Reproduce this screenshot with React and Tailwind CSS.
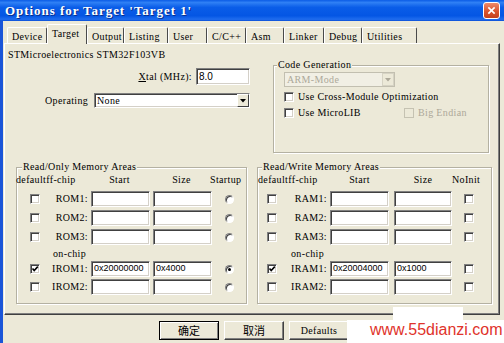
import React from 'react';

const font = "font-['Liberation_Serif',serif] text-[10px] leading-[12px] tracking-[0.35px] whitespace-nowrap";
const sim = `${font} text-black`;
const simGray = `${font} text-[#aca899]`;
const sunken = "bg-white border border-t-[#808080] border-l-[#808080] border-b-white border-r-white shadow-[inset_1px_1px_0_#404040,inset_-1px_-1px_0_#d4d0c8]";

function Check({ checked, disabled }) {
    return (
        <span className={`block shrink-0 w-[10px] h-[10px] border ${disabled ? 'border-[#c5c2b2] bg-[#ECE9D8]' : 'border-t-[#808080] border-l-[#808080] border-b-white border-r-white bg-white shadow-[inset_1px_1px_0_#404040,inset_-1px_-1px_0_#d4d0c8]'}`}>
            {checked && (
                <svg viewBox="0 0 8 8" className="w-[8px] h-[8px]">
                    <path d="M1.5 3.5 L3.2 5.5 L6.8 1.6" stroke="#000" strokeWidth="1.6" fill="none" />
                </svg>
            )}
        </span>
    );
}

function Radio({ checked }) {
    return (
        <span className="flex shrink-0 items-center justify-center w-[9px] h-[9px] rounded-full bg-white border border-t-[#808080] border-l-[#808080] border-b-white border-r-white shadow-[inset_1px_1px_0_#404040]">
            {checked && <span className="block w-[3px] h-[3px] rounded-full bg-black" />}
        </span>
    );
}

function Field({ w, value }) {
    return (
        <div className={`${w} h-[16px] shrink-0 ${sunken} flex items-center pl-[2px] font-['Liberation_Sans',sans-serif] text-[9px] text-black`}>
            {value}
        </div>
    );
}

function Btn({ children, def, cjk }) {
    return (
        <div className={`w-[60px] h-[19px] flex items-center justify-center bg-[#ECE9D8] border ${def ? 'border-black shadow-[inset_1px_1px_0_#fff,inset_-1px_-1px_0_#808080]' : 'border-t-white border-l-white border-b-[#404040] border-r-[#404040] shadow-[inset_-1px_-1px_0_#808080]'} ${cjk ? "font-['Noto_Sans_CJK_SC',sans-serif] text-[11px] text-black" : sim}`}>
            {children}
        </div>
    );
}

function Tab({ label, w, active }) {
    return (
        <div className={`${w} shrink-0 border-t border-l border-t-white border-l-white border-r border-r-[#4a4a4a] rounded-t-[2px] bg-[#ECE9D8] pl-[4px] ${sim} ${active ? 'h-[20px] pt-[3px] -mb-px relative z-10' : 'h-[16px] pt-[3px]'}`}>
            {label}
        </div>
    );
}

const tabs = [
    ['Device', 'w-[40px]'],
    ['Target', 'w-[40px]'],
    ['Output', 'w-[37px]'],
    ['Listing', 'w-[44px]'],
    ['User', 'w-[39px]'],
    ['C/C++', 'w-[39px]'],
    ['Asm', 'w-[38px]'],
    ['Linker', 'w-[40px]'],
    ['Debug', 'w-[38px]'],
    ['Utilities', 'w-[55px]'],
];

const etched = "border border-[#b4b1a2] shadow-[1px_1px_0_#fff,inset_1px_1px_0_#fff]";

function RomRow({ label, checked, start, size, startup }) {
    return (
        <div className="flex items-center h-[16px] pl-[13px]">
            <Check checked={checked} />
            <span className={`w-[51px] text-right pr-[3px] ${sim}`}>{label}</span>
            <Field w="w-[59px]" value={start} />
            <span className="w-[3px]" />
            <Field w="w-[59px]" value={size} />
            <span className="ml-[13px]"><Radio checked={startup} /></span>
        </div>
    );
}

function RamRow({ label, checked, start, size }) {
    return (
        <div className="flex items-center h-[16px] pl-[9px]">
            <Check checked={checked} />
            <span className={`w-[53px] text-right pr-[3px] ${sim}`}>{label}</span>
            <Field w="w-[59px]" value={start} />
            <span className="w-[5px]" />
            <Field w="w-[58px]" value={size} />
            <span className="ml-[12px]"><Check /></span>
        </div>
    );
}

export default function App() {
    return (
        <div className="w-[504px] h-[343px] overflow-hidden relative bg-[#ECE9D8] flex flex-col">
            {/* title bar */}
            <div className="h-[21px] shrink-0 flex items-center pl-[5px] pr-[4px] bg-[linear-gradient(to_bottom,#0b5ce6_0%,#2f80f5_12%,#0a5de8_35%,#0456e4_75%,#1f6cee_92%,#0a4fd6_100%)]">
                <span className="font-['Liberation_Serif',serif] font-bold text-[13px] leading-[14px] tracking-[0.95px] text-white [text-shadow:1px_1px_0_#0a2f8a]">Options for Target 'Target 1'</span>
                <div className="ml-auto w-[17px] h-[17px] rounded-[3px] border border-white bg-[linear-gradient(to_bottom,#ef8a6a,#d9542f_55%,#c2401c)] flex items-center justify-center">
                    <svg viewBox="0 0 10 10" className="w-[9px] h-[9px]">
                        <path d="M1.5 1.5 L8.5 8.5 M8.5 1.5 L1.5 8.5" stroke="#fff" strokeWidth="1.8" />
                    </svg>
                </div>
            </div>

            <div className="flex-1 border-l-[3px] border-[#1a55d8] flex flex-col">
                {/* tabs */}
                <div className="h-[22px] shrink-0 flex items-end pl-[4px]">
                    {tabs.map(([label, w]) => (
                        <Tab key={label} label={label} w={w} active={label === 'Target'} />
                    ))}
                </div>

                {/* tab panel */}
                <div className="ml-[1px] w-[496px] h-[272px] shrink-0 border border-t-white border-l-white border-r-[#404040] border-b-[#404040] shadow-[inset_-1px_-1px_0_#808080] flex flex-col">
                    <div className="flex">
                        <div className="w-[251px] shrink-0">
                            <div className={`pl-[3px] pt-[5px] ${sim}`}>STMicroelectronics STM32F103VB</div>
                            <div className="flex items-center justify-end pr-[6px] mt-[7px]">
                                <span className={sim}><u>X</u>tal (MHz):</span>
                                <div className={`ml-[4px] w-[54px] h-[17px] ${sunken} flex items-center pl-[2px] font-['Liberation_Sans',sans-serif] text-[10px] text-black`}>8.0</div>
                            </div>
                            <div className="flex items-center pl-[40px] mt-[8px]">
                                <span className={`w-[49px] ${sim}`}>Operating</span>
                                <div className={`w-[156px] h-[15px] ${sunken} flex items-center`}>
                                    <span className={`flex-1 pl-[2px] ${sim}`}>None</span>
                                    <span className="w-[12px] h-[13px] bg-[#ECE9D8] border border-t-white border-l-white border-b-[#404040] border-r-[#404040] flex items-center justify-center">
                                        <svg viewBox="0 0 6 4" className="w-[6px] h-[4px]"><path d="M0 0 H6 L3 3.5 Z" fill="#000" /></svg>
                                    </span>
                                </div>
                            </div>
                        </div>

                        <fieldset className={`ml-[17px] mt-[15px] w-[216px] h-[94px] ${etched}`}>
                            <legend className={`ml-[3px] px-[1px] bg-[#ECE9D8] ${sim}`}>Code Generation</legend>
                            <div className="pl-[10px]">
                                <div className="mt-[1px] w-[111px] h-[15px] border border-[#c2bfb0] bg-[#f1efe4] flex items-center">
                                    <span className={`flex-1 pl-[2px] ${simGray}`}>ARM-Mode</span>
                                    <span className="w-[12px] h-[13px] border border-[#d6d3c4] bg-[#ECE9D8] flex items-center justify-center">
                                        <svg viewBox="0 0 6 4" className="w-[6px] h-[4px]"><path d="M0 0 H6 L3 3.5 Z" fill="#aca899" /></svg>
                                    </span>
                                </div>
                                <div className="flex items-center h-[12px] mt-[4px]">
                                    <Check />
                                    <span className={`ml-[4px] ${sim}`}>Use Cross-Module Optimization</span>
                                </div>
                                <div className="flex items-center h-[12px] mt-[4px]">
                                    <Check />
                                    <span className={`ml-[4px] w-[106px] ${sim}`}>Use MicroLIB</span>
                                    <Check disabled />
                                    <span className={`ml-[4px] ${simGray}`}>Big Endian</span>
                                </div>
                            </div>
                        </fieldset>
                    </div>

                    <div className="flex mt-[8px]">
                        <fieldset className={`ml-[11px] w-[231px] h-[143px] ${etched}`}>
                            <legend className={`ml-[5px] px-[1px] bg-[#ECE9D8] ${sim}`}>Read/Only Memory Areas</legend>
                            <div className={`flex mt-[1px] ${sim}`}>
                                <span className="w-[74px] -ml-[1px]">defaultff-chip</span>
                                <span className="w-[59px] text-center">Start</span>
                                <span className="w-[3px]" />
                                <span className="w-[59px] text-center">Size</span>
                                <span className="w-[34px] -ml-[1px] overflow-hidden">Startup</span>
                            </div>
                            <div className="mt-[5px] flex flex-col gap-[3px]">
                                <RomRow label="ROM1:" />
                                <RomRow label="ROM2:" />
                                <RomRow label="ROM3:" />
                            </div>
                            <div className={`pl-[36px] mt-[3px] ${sim}`}>on-chip</div>
                            <div className="mt-[1px] flex flex-col gap-[2px]">
                                <RomRow label="IROM1:" checked start="0x20000000" size="0x4000" startup />
                                <RomRow label="IROM2:" />
                            </div>
                        </fieldset>

                        <fieldset className={`ml-[10px] w-[235px] h-[143px] ${etched}`}>
                            <legend className={`ml-[4px] px-[1px] bg-[#ECE9D8] ${sim}`}>Read/Write Memory Areas</legend>
                            <div className={`flex mt-[1px] ${sim}`}>
                                <span className="w-[72px]">defaultff-chip</span>
                                <span className="w-[59px] text-center">Start</span>
                                <span className="w-[5px]" />
                                <span className="w-[58px] text-center">Size</span>
                                <span>NoInit</span>
                            </div>
                            <div className="mt-[5px] flex flex-col gap-[3px]">
                                <RamRow label="RAM1:" />
                                <RamRow label="RAM2:" />
                                <RamRow label="RAM3:" />
                            </div>
                            <div className={`pl-[33px] mt-[3px] ${sim}`}>on-chip</div>
                            <div className="mt-[1px] flex flex-col gap-[2px]">
                                <RamRow label="IRAM1:" checked start="0x20004000" size="0x1000" />
                                <RamRow label="IRAM2:" />
                            </div>
                        </fieldset>
                    </div>
                </div>

                {/* buttons */}
                <div className="flex gap-[5px] pl-[156px] mt-[6px]">
                    <Btn def cjk>确定</Btn>
                    <Btn cjk>取消</Btn>
                    <Btn>Defaults</Btn>
                </div>
            </div>

            {/* site watermark laid over the dialog */}
            <div className="absolute left-[393px] top-[307px] w-[70px] h-[13px] bg-white" />
            <div className="absolute left-[347px] top-[320px] right-0 bottom-0 bg-white pl-[23px] pt-[2px] font-['Liberation_Sans',sans-serif] text-[16px] leading-[16px] text-[#e0332b] whitespace-nowrap">
                www.55dianzi.com
            </div>
        </div>
    );
}
